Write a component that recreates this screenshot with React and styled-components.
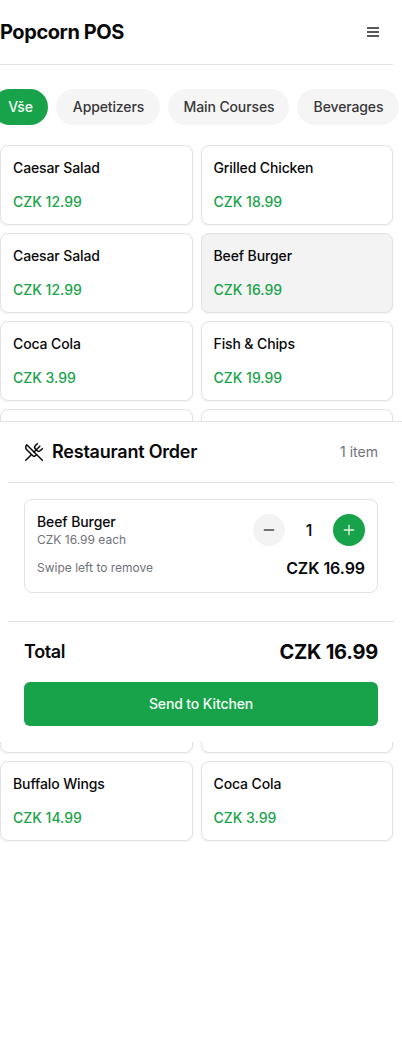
import React from "react";
import styled, { createGlobalStyle } from "styled-components";
import { Minus, Plus, UtensilsCrossed } from "lucide-react";

const GlobalStyle = createGlobalStyle`
  *, *::before, *::after { box-sizing: border-box; }
  body {
    margin: 0;
    background: #fff;
    color: #09090b;
    font-family: Inter, "Liberation Sans", sans-serif;
    font-size: 14px;
    line-height: 20px;
    overflow: hidden;
    -webkit-font-smoothing: antialiased;
  }
  button { font: inherit; color: inherit; border: 0; padding: 0; }
  h1, h2, h3, p { margin: 0; }
`;

const Screen = styled.div`
  position: relative;
  width: 402px;
  height: 1045px;
  overflow: hidden;
`;

const Page = styled.main`
  width: 393px;
`;

const TopBar = styled.header`
  display: flex;
  align-items: center;
  justify-content: space-between;
  height: 65px;
  padding-right: 14px;
  border-bottom: 1px solid #e2e2e4;
`;

const Brand = styled.h1`
  font-size: 20px;
  line-height: 28px;
  font-weight: 700;
  letter-spacing: -0.43px;
`;

const MenuButton = styled.button`
  display: flex;
  width: 12px;
  height: 10px;
  background: none;
  color: #58585a;
`;

const Categories = styled.nav`
  display: flex;
  gap: 8px;
  width: max-content;
  margin: 24px 0 20px -8px;
`;

const Category = styled.button`
  height: 36px;
  width: ${(p) => p.$width}px;
  padding-left: 1px;
  border-radius: 18px;
  white-space: nowrap;
  font-weight: 450;
  letter-spacing: -0.12px;
  background: ${(p) => (p.$active ? "#18a34a" : "#f5f5f5")};
  color: ${(p) => (p.$active ? "#f5fff7" : "#38383a")};
`;

const Menu = styled.section`
  display: grid;
  grid-template-columns: 1fr 1fr;
  grid-auto-rows: 80px;
  gap: 8px;
`;

const Card = styled.article`
  display: flex;
  flex-direction: column;
  justify-content: space-between;
  padding: 12px;
  border: 1px solid #e2e2e4;
  border-radius: 8px;
  background: ${(p) => (p.$selected ? "#f3f3f3" : "#fff")};
  box-shadow: 0 1px 2px rgba(0, 0, 0, 0.06);
`;

const DishName = styled.h3`
  font-size: 14px;
  line-height: 20px;
  font-weight: 500;
  letter-spacing: -0.12px;
`;

const Price = styled.p`
  font-weight: 450;
  color: #18a34a;
`;

const Sheet = styled.aside`
  position: absolute;
  top: 421px;
  left: 0;
  right: 0;
  height: 321px;
  padding: 0 8px;
  border-top: 1px solid #e2e2e4;
  background: #fff;
`;

const SheetHeader = styled.header`
  display: flex;
  align-items: center;
  justify-content: space-between;
  height: 61px;
  padding: 0 16px;
  border-bottom: 1px solid #e2e2e4;
`;

const SheetTitle = styled.h2`
  display: flex;
  align-items: center;
  gap: 8px;
  font-size: 18px;
  line-height: 28px;
  font-weight: 600;
  letter-spacing: -0.22px;
`;

const Count = styled.span`
  color: #71717a;
`;

const Lines = styled.div`
  padding: 16px 16px 28px;
`;

const Line = styled.div`
  height: 94px;
  padding: 12px;
  border: 1px solid #e2e2e4;
  border-radius: 8px;
`;

const LineRow = styled.div`
  display: flex;
  align-items: center;
  justify-content: space-between;
  margin-top: ${(p) => p.$top || 0}px;
`;

const LineName = styled.h3`
  font-size: 14px;
  line-height: 20px;
  font-weight: 500;
  letter-spacing: -0.1px;
`;

const Small = styled.p`
  font-size: 12px;
  line-height: 16px;
  color: #71717a;
`;

const Stepper = styled.div`
  display: flex;
  align-items: center;
`;

const Quantity = styled.span`
  width: 48px;
  text-align: center;
  font-size: 16px;
  font-weight: 500;
`;

const Round = styled.button`
  display: flex;
  align-items: center;
  justify-content: center;
  width: 32px;
  height: 32px;
  border-radius: 50%;
  background: ${(p) => (p.$primary ? "#18a34a" : "#f3f3f3")};
  color: ${(p) => (p.$primary ? "#e3f3e8" : "#48484a")};
`;

const LineTotal = styled.strong`
  font-size: 16px;
  line-height: 24px;
  font-weight: 600;
  letter-spacing: -0.06px;
`;

const Checkout = styled.footer`
  padding: 16px;
  border-top: 1px solid #e2e2e4;
`;

const TotalRow = styled.div`
  display: flex;
  align-items: center;
  justify-content: space-between;
  height: 28px;
  margin-bottom: 16px;
`;

const TotalLabel = styled.span`
  font-size: 18px;
  font-weight: 600;
  letter-spacing: -0.35px;
`;

const TotalValue = styled.strong`
  font-size: 20px;
  font-weight: 700;
  letter-spacing: -0.23px;
`;

const SendButton = styled.button`
  width: 100%;
  height: 44px;
  border-radius: 6px;
  background: #18a34a;
  color: #f5fff7;
  font-weight: 450;
  letter-spacing: -0.12px;
`;

const categories = [
  { name: "Vše", width: 56, active: true },
  { name: "Appetizers", width: 104 },
  { name: "Main Courses", width: 121 },
  { name: "Beverages", width: 102 },
];

const dishes = [
  ["Caesar Salad", "12.99"],
  ["Grilled Chicken", "18.99"],
  ["Caesar Salad", "12.99"],
  ["Beef Burger", "16.99", true],
  ["Coca Cola", "3.99"],
  ["Fish & Chips", "19.99"],
  [], [], [], [], [], [], [], [],
  ["Buffalo Wings", "14.99"],
  ["Coca Cola", "3.99"],
];

export default function App() {
  return (
    <Screen>
      <GlobalStyle />
      <Page>
        <TopBar>
          <Brand>Popcorn POS</Brand>
          <MenuButton aria-label="Menu">
            <svg width="12" height="10" viewBox="0 0 12 10" fill="currentColor">
              <path d="M0 0h12v2H0zM0 4h12v2H0zM0 8h12v2H0z" />
            </svg>
          </MenuButton>
        </TopBar>
        <Categories>
          {categories.map((c) => (
            <Category key={c.name} $width={c.width} $active={c.active}>
              {c.name}
            </Category>
          ))}
        </Categories>
        <Menu>
          {dishes.map(([name, price, selected], i) => (
            <Card key={i} $selected={selected}>
              {name && <DishName>{name}</DishName>}
              {price && <Price>CZK {price}</Price>}
            </Card>
          ))}
        </Menu>
      </Page>
      <Sheet>
        <SheetHeader>
          <SheetTitle>
            <UtensilsCrossed size={20} strokeWidth={1.8} />
            Restaurant Order
          </SheetTitle>
          <Count>1 item</Count>
        </SheetHeader>
        <Lines>
          <Line>
            <LineRow>
              <div>
                <LineName>Beef Burger</LineName>
                <Small>CZK 16.99 each</Small>
              </div>
              <Stepper>
                <Round aria-label="Remove one"><Minus size={16} /></Round>
                <Quantity>1</Quantity>
                <Round aria-label="Add one" $primary><Plus size={16} /></Round>
              </Stepper>
            </LineRow>
            <LineRow $top={8}>
              <Small>Swipe left to remove</Small>
              <LineTotal>CZK 16.99</LineTotal>
            </LineRow>
          </Line>
        </Lines>
        <Checkout>
          <TotalRow>
            <TotalLabel>Total</TotalLabel>
            <TotalValue>CZK 16.99</TotalValue>
          </TotalRow>
          <SendButton>Send to Kitchen</SendButton>
        </Checkout>
      </Sheet>
    </Screen>
  );
}
